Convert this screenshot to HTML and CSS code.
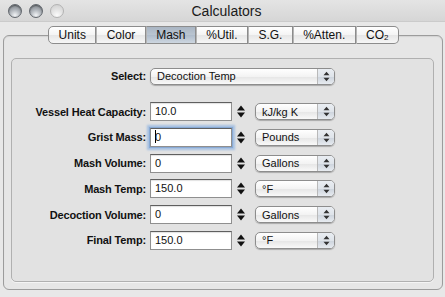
FILE: index.html
```html
<!DOCTYPE html>
<html>
<head>
  <title>Calculators</title>
  <meta charset="UTF-8">
  <link rel="stylesheet" href="styles.css">
</head>
<body>
  <div class="window">
    <div class="titlebar">
      <div class="lights">
        <span class="light"></span>
        <span class="light"></span>
        <span class="light off"></span>
      </div>
      <div class="title">Calculators</div>
    </div>

    <div class="content">
      <div class="tabs">
        <div class="tab first">Units</div>
        <div class="tab">Color</div>
        <div class="tab selected">Mash</div>
        <div class="tab">%Util.</div>
        <div class="tab">S.G.</div>
        <div class="tab">%Atten.</div>
        <div class="tab last">CO<sub>2</sub></div>
      </div>

      <div class="panel">
        <div class="group">
          <div class="row-grid select-row">
            <label class="lbl">Select:</label>
            <div class="popup wide">
              <span class="popup-text">Decoction Temp</span>
              <span class="popup-arrows"><svg width="7" height="11" viewBox="0 0 7 11"><path d="M0.5 4.2 L3.5 0.8 L6.5 4.2 Z M0.5 6.8 L3.5 10.2 L6.5 6.8 Z" fill="#333"/></svg></span>
            </div>
          </div>

          <div class="row-grid fields">
            <label class="lbl">Vessel Heat Capacity:</label>
            <div class="field">10.0</div>
            <div class="stepper"><svg width="8" height="13" viewBox="0 0 8 13"><path d="M0 5.5 L4 0.5 L8 5.5 Z M0 7.5 L4 12.5 L8 7.5 Z" fill="#111"/></svg></div>
            <div class="popup"><span class="popup-text">kJ/kg K</span><span class="popup-arrows"><svg width="7" height="11" viewBox="0 0 7 11"><path d="M0.5 4.2 L3.5 0.8 L6.5 4.2 Z M0.5 6.8 L3.5 10.2 L6.5 6.8 Z" fill="#333"/></svg></span></div>

            <label class="lbl">Grist Mass:</label>
            <div class="field focused"><span class="caret"></span>0</div>
            <div class="stepper"><svg width="8" height="13" viewBox="0 0 8 13"><path d="M0 5.5 L4 0.5 L8 5.5 Z M0 7.5 L4 12.5 L8 7.5 Z" fill="#111"/></svg></div>
            <div class="popup"><span class="popup-text">Pounds</span><span class="popup-arrows"><svg width="7" height="11" viewBox="0 0 7 11"><path d="M0.5 4.2 L3.5 0.8 L6.5 4.2 Z M0.5 6.8 L3.5 10.2 L6.5 6.8 Z" fill="#333"/></svg></span></div>

            <label class="lbl">Mash Volume:</label>
            <div class="field">0</div>
            <div class="stepper"><svg width="8" height="13" viewBox="0 0 8 13"><path d="M0 5.5 L4 0.5 L8 5.5 Z M0 7.5 L4 12.5 L8 7.5 Z" fill="#111"/></svg></div>
            <div class="popup"><span class="popup-text">Gallons</span><span class="popup-arrows"><svg width="7" height="11" viewBox="0 0 7 11"><path d="M0.5 4.2 L3.5 0.8 L6.5 4.2 Z M0.5 6.8 L3.5 10.2 L6.5 6.8 Z" fill="#333"/></svg></span></div>

            <label class="lbl">Mash Temp:</label>
            <div class="field">150.0</div>
            <div class="stepper"><svg width="8" height="13" viewBox="0 0 8 13"><path d="M0 5.5 L4 0.5 L8 5.5 Z M0 7.5 L4 12.5 L8 7.5 Z" fill="#111"/></svg></div>
            <div class="popup"><span class="popup-text">°F</span><span class="popup-arrows"><svg width="7" height="11" viewBox="0 0 7 11"><path d="M0.5 4.2 L3.5 0.8 L6.5 4.2 Z M0.5 6.8 L3.5 10.2 L6.5 6.8 Z" fill="#333"/></svg></span></div>

            <label class="lbl">Decoction Volume:</label>
            <div class="field">0</div>
            <div class="stepper"><svg width="8" height="13" viewBox="0 0 8 13"><path d="M0 5.5 L4 0.5 L8 5.5 Z M0 7.5 L4 12.5 L8 7.5 Z" fill="#111"/></svg></div>
            <div class="popup"><span class="popup-text">Gallons</span><span class="popup-arrows"><svg width="7" height="11" viewBox="0 0 7 11"><path d="M0.5 4.2 L3.5 0.8 L6.5 4.2 Z M0.5 6.8 L3.5 10.2 L6.5 6.8 Z" fill="#333"/></svg></span></div>

            <label class="lbl">Final Temp:</label>
            <div class="field">150.0</div>
            <div class="stepper"><svg width="8" height="13" viewBox="0 0 8 13"><path d="M0 5.5 L4 0.5 L8 5.5 Z M0 7.5 L4 12.5 L8 7.5 Z" fill="#111"/></svg></div>
            <div class="popup"><span class="popup-text">°F</span><span class="popup-arrows"><svg width="7" height="11" viewBox="0 0 7 11"><path d="M0.5 4.2 L3.5 0.8 L6.5 4.2 Z M0.5 6.8 L3.5 10.2 L6.5 6.8 Z" fill="#333"/></svg></span></div>
          </div>
        </div>
      </div>
    </div>
  </div>
</body>
</html>
```

FILE: styles.css
```css
body {
  margin: 0;
  font-family: "Liberation Sans", Arial, sans-serif;
  background: #e8e8e8;
}
.window {
  width: 445px;
  height: 297px;
  display: flex;
  flex-direction: column;
  background: #e8e8e8;
  overflow: hidden;
}
.titlebar {
  height: 22px;
  flex: none;
  display: flex;
  align-items: center;
  background: linear-gradient(#e4e4e4, #d6d6d6);
  border-bottom: 1px solid #cbcbcb;
  box-sizing: border-box;
}
.lights {
  display: flex;
  gap: 7px;
  padding-left: 8px;
  width: 120px;
}
.light {
  width: 14px;
  height: 14px;
  border-radius: 50%;
  box-sizing: border-box;
  border: 1px solid #62676d;
  background: radial-gradient(circle at 50% 85%, #f2f4f6 0%, #b1b6bc 45%, #6f747a 100%);
  box-shadow: inset 0 1px 1px rgba(0,0,0,0.35);
}
.light.off {
  border-color: #b3b3b3;
  background: radial-gradient(circle at 50% 85%, #fbfbfb 0%, #e2e2e2 50%, #cdcdcd 100%);
  box-shadow: none;
}
.title {
  flex: 1;
  text-align: center;
  font-size: 14px;
  color: #1a1a1a;
  margin-left: -120px;
}
.content {
  flex: 1;
  display: flex;
  flex-direction: column;
  padding: 4px 2px 7px 3px;
}
.tabs {
  display: flex;
  justify-content: center;
  height: 18px;
  margin-bottom: -9px;
  margin-left: 1px;
  position: relative;
  z-index: 1;
}
.tab {
  padding: 0 9.4px;
  font-size: 12px;
  line-height: 16px;
  color: #111;
  border: 1px solid #8c8c8c;
  border-left: 1px solid #b5b5b5;
  background: linear-gradient(#ffffff 0%, #f4f4f4 50%, #e6e6e6 51%, #f6f6f6 100%);
}
.tab.first {
  border-left-color: #8c8c8c;
  border-radius: 5px 0 0 5px;
}
.tab.last {
  border-radius: 0 5px 5px 0;
}
.tab.selected {
  background: linear-gradient(#a9b5c3 0%, #bac5d1 50%, #aebbca 51%, #cdd6e0 100%);
}
.tab sub {
  font-size: 8px;
  vertical-align: -1px;
}
.panel {
  flex: 1;
  display: flex;
  border: 1px solid #9c9c9c;
  border-radius: 6px;
  background: #e6e6e6;
  padding: 22px 8px 7px 7px;
  box-shadow: inset 0 1px 1px rgba(0,0,0,0.08);
}
.group {
  flex: 1;
  border: 1px solid #b0b0b0;
  border-radius: 5px;
  background: #e2e2e2;
  box-shadow: 0 1px 0 #f4f4f4;
}
.row-grid {
  display: grid;
  grid-template-columns: 138px 82px 23px 80px;
  align-items: center;
}
.select-row {
  margin-top: 8px;
  grid-template-rows: 18px;
}
.fields {
  margin-top: 17px;
  grid-template-rows: repeat(6, 19px);
  row-gap: 6.8px;
}
.lbl {
  font-size: 11px;
  font-weight: bold;
  letter-spacing: -0.15px;
  color: #111;
  text-align: right;
  padding-right: 4px;
  white-space: nowrap;
}
.field {
  height: 19px;
  box-sizing: border-box;
  border: 1px solid #8f8f8f;
  border-top-color: #5f5f5f;
  background: #fff;
  font-size: 11px;
  line-height: 17px;
  padding-left: 4px;
  color: #111;
  box-shadow: inset 0 1px 1px rgba(0,0,0,0.12);
}
.field.focused {
  box-shadow: 0 0 0 1px #88a9d4, 0 0 2px 3px #a6c0e2;
}
.caret {
  display: inline-block;
  width: 1px;
  height: 13px;
  background: #000;
  vertical-align: -2px;
  margin-right: -1px;
}
.stepper {
  display: flex;
  padding-left: 5px;
}
.popup {
  height: 17px;
  box-sizing: border-box;
  display: flex;
  align-items: center;
  border: 1px solid #8d8d8d;
  border-radius: 5px;
  background: linear-gradient(#ffffff 0%, #f3f3f3 50%, #e5e5e5 51%, #f9f9f9 100%);
  box-shadow: 0 1px 1px rgba(0,0,0,0.25);
  font-size: 11px;
  color: #111;
}
.popup.wide {
  grid-column: 2 / 5;
}
.popup-text {
  flex: 1;
  padding-left: 6px;
  white-space: nowrap;
}
.popup-arrows {
  width: 16px;
  height: 15px;
  display: flex;
  align-items: center;
  justify-content: center;
  border-left: 1px solid #b9b9b9;
  border-radius: 0 4px 4px 0;
  background: linear-gradient(#e9edf2 0%, #dfe4ea 50%, #ccd3dc 51%, #e7ebf0 100%);
}
```
